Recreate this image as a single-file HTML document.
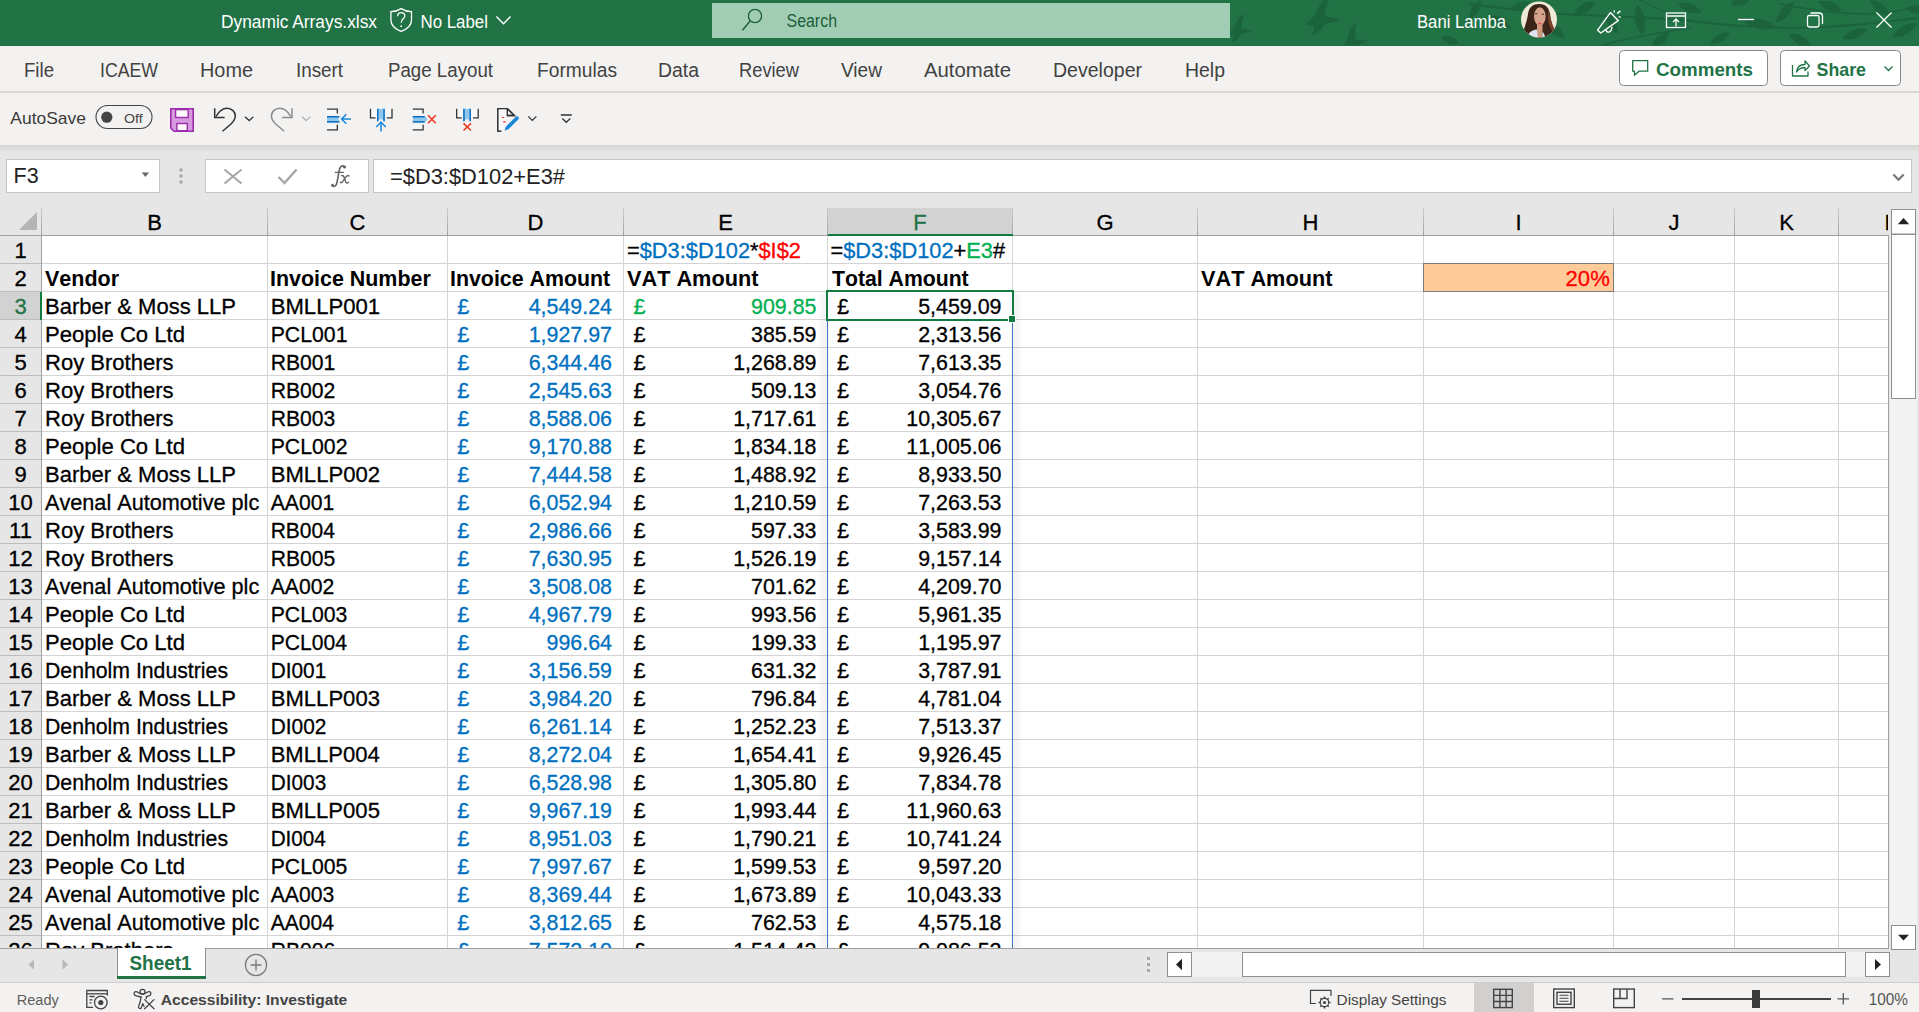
<!DOCTYPE html>
<html><head><meta charset="utf-8"><title>Dynamic Arrays.xlsx - Excel</title>
<style>html,body{margin:0;padding:0;overflow:hidden;background:#f3f2f1}
svg{display:block;font-family:"Liberation Sans", sans-serif}</style></head><body>
<svg width="1919" height="1012" viewBox="0 0 1919 1012"><rect x="0" y="0" width="1919" height="1012" fill="#f3f2f1" /><rect x="0" y="145" width="1919" height="803" fill="#e6e6e6" /><defs><linearGradient id="shd" x1="0" y1="0" x2="0" y2="1"><stop offset="0" stop-color="#d4d3d2"/><stop offset="1" stop-color="#e6e6e6"/></linearGradient><linearGradient id="hsep" x1="0" y1="0" x2="0" y2="1"><stop offset="0" stop-color="#cdcdcd"/><stop offset="1" stop-color="#a2a2a2"/></linearGradient><clipPath id="gridclip"><rect x="0" y="236" width="1888" height="712"/></clipPath><clipPath id="lclip"><rect x="1839" y="208" width="49" height="27"/></clipPath><clipPath id="tbclip"><rect x="0" y="0" width="1919" height="45"/></clipPath><clipPath id="avclip"><circle cx="1539" cy="19.5" r="18"/></clipPath></defs><rect x="0" y="145" width="1919" height="7" fill="url(#shd)" /><rect x="42" y="236" width="1846" height="712" fill="#ffffff" /><rect x="42" y="263" width="1846" height="1" fill="#d4d4d4"/><rect x="42" y="291" width="1846" height="1" fill="#d4d4d4"/><rect x="42" y="319" width="1846" height="1" fill="#d4d4d4"/><rect x="42" y="347" width="1846" height="1" fill="#d4d4d4"/><rect x="42" y="375" width="1846" height="1" fill="#d4d4d4"/><rect x="42" y="403" width="1846" height="1" fill="#d4d4d4"/><rect x="42" y="431" width="1846" height="1" fill="#d4d4d4"/><rect x="42" y="459" width="1846" height="1" fill="#d4d4d4"/><rect x="42" y="487" width="1846" height="1" fill="#d4d4d4"/><rect x="42" y="515" width="1846" height="1" fill="#d4d4d4"/><rect x="42" y="543" width="1846" height="1" fill="#d4d4d4"/><rect x="42" y="571" width="1846" height="1" fill="#d4d4d4"/><rect x="42" y="599" width="1846" height="1" fill="#d4d4d4"/><rect x="42" y="627" width="1846" height="1" fill="#d4d4d4"/><rect x="42" y="655" width="1846" height="1" fill="#d4d4d4"/><rect x="42" y="683" width="1846" height="1" fill="#d4d4d4"/><rect x="42" y="711" width="1846" height="1" fill="#d4d4d4"/><rect x="42" y="739" width="1846" height="1" fill="#d4d4d4"/><rect x="42" y="767" width="1846" height="1" fill="#d4d4d4"/><rect x="42" y="795" width="1846" height="1" fill="#d4d4d4"/><rect x="42" y="823" width="1846" height="1" fill="#d4d4d4"/><rect x="42" y="851" width="1846" height="1" fill="#d4d4d4"/><rect x="42" y="879" width="1846" height="1" fill="#d4d4d4"/><rect x="42" y="907" width="1846" height="1" fill="#d4d4d4"/><rect x="42" y="935" width="1846" height="1" fill="#d4d4d4"/><rect x="267" y="236" width="1" height="712" fill="#d4d4d4"/><rect x="447" y="236" width="1" height="712" fill="#d4d4d4"/><rect x="623" y="236" width="1" height="712" fill="#d4d4d4"/><rect x="827" y="236" width="1" height="712" fill="#d4d4d4"/><rect x="1012" y="236" width="1" height="712" fill="#d4d4d4"/><rect x="1197" y="236" width="1" height="712" fill="#d4d4d4"/><rect x="1423" y="236" width="1" height="712" fill="#d4d4d4"/><rect x="1613" y="236" width="1" height="712" fill="#d4d4d4"/><rect x="1734" y="236" width="1" height="712" fill="#d4d4d4"/><rect x="1838" y="236" width="1" height="712" fill="#d4d4d4"/><rect x="1423" y="263" width="191" height="29" fill="#ffcc99" stroke="none"/><rect x="1423.5" y="263.5" width="190" height="28" fill="none" stroke="#7b7b7b" stroke-width="1"/><g clip-path="url(#gridclip)" font-family='"Liberation Sans", sans-serif' style="font-kerning:none" class="ct"><text x="627" y="257.5" font-size="21.8" fill="#000" stroke="#000" stroke-width="0.3">=<tspan fill="#0070c0" stroke="#0070c0">$D3:$D102</tspan>*<tspan fill="#ff0000" stroke="#ff0000">$I$2</tspan></text><text x="830.5" y="257.5" font-size="21.8" fill="#000" stroke="#000" stroke-width="0.3">=<tspan fill="#0070c0" stroke="#0070c0">$D3:$D102</tspan>+<tspan fill="#00b050" stroke="#00b050">E3</tspan>#</text><text x="45" y="285.5" font-size="21.33" fill="#000" font-weight="700" textLength="74.07" lengthAdjust="spacingAndGlyphs" >Vendor</text><text x="270" y="285.5" font-size="21.33" fill="#000" font-weight="700" textLength="160.76" lengthAdjust="spacingAndGlyphs" >Invoice Number</text><text x="450" y="285.5" font-size="21.33" fill="#000" font-weight="700" textLength="160.19" lengthAdjust="spacingAndGlyphs" >Invoice Amount</text><text x="627" y="285.5" font-size="21.33" fill="#000" font-weight="700" textLength="131.41" lengthAdjust="spacingAndGlyphs" >VAT Amount</text><text x="832" y="285.5" font-size="21.33" fill="#000" font-weight="700" textLength="136.70" lengthAdjust="spacingAndGlyphs" >Total Amount</text><text x="1201" y="285.5" font-size="21.33" fill="#000" font-weight="700" textLength="131.41" lengthAdjust="spacingAndGlyphs" >VAT Amount</text><text x="1609.8" y="285.5" font-size="22" fill="#ff0000" text-anchor="end" textLength="44.20" lengthAdjust="spacingAndGlyphs" stroke="#ff0000" stroke-width="0.3">20%</text><text x="45" y="313.5" font-size="22" fill="#000" textLength="190.97" lengthAdjust="spacingAndGlyphs" stroke="#000" stroke-width="0.3">Barber &amp; Moss LLP</text><text x="270.7" y="313.5" font-size="22" fill="#000" textLength="109.39" lengthAdjust="spacingAndGlyphs" stroke="#000" stroke-width="0.3">BMLLP001</text><text x="457.2" y="313.5" font-size="22" fill="#0070c0" textLength="12.12" lengthAdjust="spacingAndGlyphs" stroke="#0070c0" stroke-width="0.3">£</text><text x="612" y="313.5" font-size="22" fill="#0070c0" text-anchor="end" textLength="83.30" lengthAdjust="spacingAndGlyphs" stroke="#0070c0" stroke-width="0.3">4,549.24</text><text x="633.5" y="313.5" font-size="22" fill="#00b050" textLength="12.12" lengthAdjust="spacingAndGlyphs" stroke="#00b050" stroke-width="0.3">£</text><text x="816.5" y="313.5" font-size="22" fill="#00b050" text-anchor="end" textLength="65.45" lengthAdjust="spacingAndGlyphs" stroke="#00b050" stroke-width="0.3">909.85</text><text x="837" y="313.5" font-size="22" fill="#000" textLength="12.12" lengthAdjust="spacingAndGlyphs" stroke="#000" stroke-width="0.3">£</text><text x="1001.5" y="313.5" font-size="22" fill="#000" text-anchor="end" textLength="83.30" lengthAdjust="spacingAndGlyphs" stroke="#000" stroke-width="0.3">5,459.09</text><text x="45" y="341.5" font-size="22" fill="#000" textLength="139.93" lengthAdjust="spacingAndGlyphs" stroke="#000" stroke-width="0.3">People Co Ltd</text><text x="270.7" y="341.5" font-size="22" fill="#000" textLength="76.78" lengthAdjust="spacingAndGlyphs" stroke="#000" stroke-width="0.3">PCL001</text><text x="457.2" y="341.5" font-size="22" fill="#0070c0" textLength="12.12" lengthAdjust="spacingAndGlyphs" stroke="#0070c0" stroke-width="0.3">£</text><text x="612" y="341.5" font-size="22" fill="#0070c0" text-anchor="end" textLength="83.30" lengthAdjust="spacingAndGlyphs" stroke="#0070c0" stroke-width="0.3">1,927.97</text><text x="633.5" y="341.5" font-size="22" fill="#000" textLength="12.12" lengthAdjust="spacingAndGlyphs" stroke="#000" stroke-width="0.3">£</text><text x="816.5" y="341.5" font-size="22" fill="#000" text-anchor="end" textLength="65.45" lengthAdjust="spacingAndGlyphs" stroke="#000" stroke-width="0.3">385.59</text><text x="837" y="341.5" font-size="22" fill="#000" textLength="12.12" lengthAdjust="spacingAndGlyphs" stroke="#000" stroke-width="0.3">£</text><text x="1001.5" y="341.5" font-size="22" fill="#000" text-anchor="end" textLength="83.30" lengthAdjust="spacingAndGlyphs" stroke="#000" stroke-width="0.3">2,313.56</text><text x="45" y="369.5" font-size="22" fill="#000" textLength="128.50" lengthAdjust="spacingAndGlyphs" stroke="#000" stroke-width="0.3">Roy Brothers</text><text x="270.7" y="369.5" font-size="22" fill="#000" textLength="64.67" lengthAdjust="spacingAndGlyphs" stroke="#000" stroke-width="0.3">RB001</text><text x="457.2" y="369.5" font-size="22" fill="#0070c0" textLength="12.12" lengthAdjust="spacingAndGlyphs" stroke="#0070c0" stroke-width="0.3">£</text><text x="612" y="369.5" font-size="22" fill="#0070c0" text-anchor="end" textLength="83.30" lengthAdjust="spacingAndGlyphs" stroke="#0070c0" stroke-width="0.3">6,344.46</text><text x="633.5" y="369.5" font-size="22" fill="#000" textLength="12.12" lengthAdjust="spacingAndGlyphs" stroke="#000" stroke-width="0.3">£</text><text x="816.5" y="369.5" font-size="22" fill="#000" text-anchor="end" textLength="83.30" lengthAdjust="spacingAndGlyphs" stroke="#000" stroke-width="0.3">1,268.89</text><text x="837" y="369.5" font-size="22" fill="#000" textLength="12.12" lengthAdjust="spacingAndGlyphs" stroke="#000" stroke-width="0.3">£</text><text x="1001.5" y="369.5" font-size="22" fill="#000" text-anchor="end" textLength="83.30" lengthAdjust="spacingAndGlyphs" stroke="#000" stroke-width="0.3">7,613.35</text><text x="45" y="397.5" font-size="22" fill="#000" textLength="128.50" lengthAdjust="spacingAndGlyphs" stroke="#000" stroke-width="0.3">Roy Brothers</text><text x="270.7" y="397.5" font-size="22" fill="#000" textLength="64.70" lengthAdjust="spacingAndGlyphs" stroke="#000" stroke-width="0.3">RB002</text><text x="457.2" y="397.5" font-size="22" fill="#0070c0" textLength="12.12" lengthAdjust="spacingAndGlyphs" stroke="#0070c0" stroke-width="0.3">£</text><text x="612" y="397.5" font-size="22" fill="#0070c0" text-anchor="end" textLength="83.30" lengthAdjust="spacingAndGlyphs" stroke="#0070c0" stroke-width="0.3">2,545.63</text><text x="633.5" y="397.5" font-size="22" fill="#000" textLength="12.12" lengthAdjust="spacingAndGlyphs" stroke="#000" stroke-width="0.3">£</text><text x="816.5" y="397.5" font-size="22" fill="#000" text-anchor="end" textLength="65.45" lengthAdjust="spacingAndGlyphs" stroke="#000" stroke-width="0.3">509.13</text><text x="837" y="397.5" font-size="22" fill="#000" textLength="12.12" lengthAdjust="spacingAndGlyphs" stroke="#000" stroke-width="0.3">£</text><text x="1001.5" y="397.5" font-size="22" fill="#000" text-anchor="end" textLength="83.30" lengthAdjust="spacingAndGlyphs" stroke="#000" stroke-width="0.3">3,054.76</text><text x="45" y="425.5" font-size="22" fill="#000" textLength="128.50" lengthAdjust="spacingAndGlyphs" stroke="#000" stroke-width="0.3">Roy Brothers</text><text x="270.7" y="425.5" font-size="22" fill="#000" textLength="64.56" lengthAdjust="spacingAndGlyphs" stroke="#000" stroke-width="0.3">RB003</text><text x="457.2" y="425.5" font-size="22" fill="#0070c0" textLength="12.12" lengthAdjust="spacingAndGlyphs" stroke="#0070c0" stroke-width="0.3">£</text><text x="612" y="425.5" font-size="22" fill="#0070c0" text-anchor="end" textLength="83.30" lengthAdjust="spacingAndGlyphs" stroke="#0070c0" stroke-width="0.3">8,588.06</text><text x="633.5" y="425.5" font-size="22" fill="#000" textLength="12.12" lengthAdjust="spacingAndGlyphs" stroke="#000" stroke-width="0.3">£</text><text x="816.5" y="425.5" font-size="22" fill="#000" text-anchor="end" textLength="83.30" lengthAdjust="spacingAndGlyphs" stroke="#000" stroke-width="0.3">1,717.61</text><text x="837" y="425.5" font-size="22" fill="#000" textLength="12.12" lengthAdjust="spacingAndGlyphs" stroke="#000" stroke-width="0.3">£</text><text x="1001.5" y="425.5" font-size="22" fill="#000" text-anchor="end" textLength="95.20" lengthAdjust="spacingAndGlyphs" stroke="#000" stroke-width="0.3">10,305.67</text><text x="45" y="453.5" font-size="22" fill="#000" textLength="139.93" lengthAdjust="spacingAndGlyphs" stroke="#000" stroke-width="0.3">People Co Ltd</text><text x="270.7" y="453.5" font-size="22" fill="#000" textLength="76.81" lengthAdjust="spacingAndGlyphs" stroke="#000" stroke-width="0.3">PCL002</text><text x="457.2" y="453.5" font-size="22" fill="#0070c0" textLength="12.12" lengthAdjust="spacingAndGlyphs" stroke="#0070c0" stroke-width="0.3">£</text><text x="612" y="453.5" font-size="22" fill="#0070c0" text-anchor="end" textLength="83.30" lengthAdjust="spacingAndGlyphs" stroke="#0070c0" stroke-width="0.3">9,170.88</text><text x="633.5" y="453.5" font-size="22" fill="#000" textLength="12.12" lengthAdjust="spacingAndGlyphs" stroke="#000" stroke-width="0.3">£</text><text x="816.5" y="453.5" font-size="22" fill="#000" text-anchor="end" textLength="83.30" lengthAdjust="spacingAndGlyphs" stroke="#000" stroke-width="0.3">1,834.18</text><text x="837" y="453.5" font-size="22" fill="#000" textLength="12.12" lengthAdjust="spacingAndGlyphs" stroke="#000" stroke-width="0.3">£</text><text x="1001.5" y="453.5" font-size="22" fill="#000" text-anchor="end" textLength="95.20" lengthAdjust="spacingAndGlyphs" stroke="#000" stroke-width="0.3">11,005.06</text><text x="45" y="481.5" font-size="22" fill="#000" textLength="190.97" lengthAdjust="spacingAndGlyphs" stroke="#000" stroke-width="0.3">Barber &amp; Moss LLP</text><text x="270.7" y="481.5" font-size="22" fill="#000" textLength="109.43" lengthAdjust="spacingAndGlyphs" stroke="#000" stroke-width="0.3">BMLLP002</text><text x="457.2" y="481.5" font-size="22" fill="#0070c0" textLength="12.12" lengthAdjust="spacingAndGlyphs" stroke="#0070c0" stroke-width="0.3">£</text><text x="612" y="481.5" font-size="22" fill="#0070c0" text-anchor="end" textLength="83.30" lengthAdjust="spacingAndGlyphs" stroke="#0070c0" stroke-width="0.3">7,444.58</text><text x="633.5" y="481.5" font-size="22" fill="#000" textLength="12.12" lengthAdjust="spacingAndGlyphs" stroke="#000" stroke-width="0.3">£</text><text x="816.5" y="481.5" font-size="22" fill="#000" text-anchor="end" textLength="83.30" lengthAdjust="spacingAndGlyphs" stroke="#000" stroke-width="0.3">1,488.92</text><text x="837" y="481.5" font-size="22" fill="#000" textLength="12.12" lengthAdjust="spacingAndGlyphs" stroke="#000" stroke-width="0.3">£</text><text x="1001.5" y="481.5" font-size="22" fill="#000" text-anchor="end" textLength="83.30" lengthAdjust="spacingAndGlyphs" stroke="#000" stroke-width="0.3">8,933.50</text><text x="45" y="509.5" font-size="22" fill="#000" textLength="214.21" lengthAdjust="spacingAndGlyphs" stroke="#000" stroke-width="0.3">Avenal Automotive plc</text><text x="270.7" y="509.5" font-size="22" fill="#000" textLength="63.58" lengthAdjust="spacingAndGlyphs" stroke="#000" stroke-width="0.3">AA001</text><text x="457.2" y="509.5" font-size="22" fill="#0070c0" textLength="12.12" lengthAdjust="spacingAndGlyphs" stroke="#0070c0" stroke-width="0.3">£</text><text x="612" y="509.5" font-size="22" fill="#0070c0" text-anchor="end" textLength="83.30" lengthAdjust="spacingAndGlyphs" stroke="#0070c0" stroke-width="0.3">6,052.94</text><text x="633.5" y="509.5" font-size="22" fill="#000" textLength="12.12" lengthAdjust="spacingAndGlyphs" stroke="#000" stroke-width="0.3">£</text><text x="816.5" y="509.5" font-size="22" fill="#000" text-anchor="end" textLength="83.30" lengthAdjust="spacingAndGlyphs" stroke="#000" stroke-width="0.3">1,210.59</text><text x="837" y="509.5" font-size="22" fill="#000" textLength="12.12" lengthAdjust="spacingAndGlyphs" stroke="#000" stroke-width="0.3">£</text><text x="1001.5" y="509.5" font-size="22" fill="#000" text-anchor="end" textLength="83.30" lengthAdjust="spacingAndGlyphs" stroke="#000" stroke-width="0.3">7,263.53</text><text x="45" y="537.5" font-size="22" fill="#000" textLength="128.50" lengthAdjust="spacingAndGlyphs" stroke="#000" stroke-width="0.3">Roy Brothers</text><text x="270.7" y="537.5" font-size="22" fill="#000" textLength="64.24" lengthAdjust="spacingAndGlyphs" stroke="#000" stroke-width="0.3">RB004</text><text x="457.2" y="537.5" font-size="22" fill="#0070c0" textLength="12.12" lengthAdjust="spacingAndGlyphs" stroke="#0070c0" stroke-width="0.3">£</text><text x="612" y="537.5" font-size="22" fill="#0070c0" text-anchor="end" textLength="83.30" lengthAdjust="spacingAndGlyphs" stroke="#0070c0" stroke-width="0.3">2,986.66</text><text x="633.5" y="537.5" font-size="22" fill="#000" textLength="12.12" lengthAdjust="spacingAndGlyphs" stroke="#000" stroke-width="0.3">£</text><text x="816.5" y="537.5" font-size="22" fill="#000" text-anchor="end" textLength="65.45" lengthAdjust="spacingAndGlyphs" stroke="#000" stroke-width="0.3">597.33</text><text x="837" y="537.5" font-size="22" fill="#000" textLength="12.12" lengthAdjust="spacingAndGlyphs" stroke="#000" stroke-width="0.3">£</text><text x="1001.5" y="537.5" font-size="22" fill="#000" text-anchor="end" textLength="83.30" lengthAdjust="spacingAndGlyphs" stroke="#000" stroke-width="0.3">3,583.99</text><text x="45" y="565.5" font-size="22" fill="#000" textLength="128.50" lengthAdjust="spacingAndGlyphs" stroke="#000" stroke-width="0.3">Roy Brothers</text><text x="270.7" y="565.5" font-size="22" fill="#000" textLength="64.52" lengthAdjust="spacingAndGlyphs" stroke="#000" stroke-width="0.3">RB005</text><text x="457.2" y="565.5" font-size="22" fill="#0070c0" textLength="12.12" lengthAdjust="spacingAndGlyphs" stroke="#0070c0" stroke-width="0.3">£</text><text x="612" y="565.5" font-size="22" fill="#0070c0" text-anchor="end" textLength="83.30" lengthAdjust="spacingAndGlyphs" stroke="#0070c0" stroke-width="0.3">7,630.95</text><text x="633.5" y="565.5" font-size="22" fill="#000" textLength="12.12" lengthAdjust="spacingAndGlyphs" stroke="#000" stroke-width="0.3">£</text><text x="816.5" y="565.5" font-size="22" fill="#000" text-anchor="end" textLength="83.30" lengthAdjust="spacingAndGlyphs" stroke="#000" stroke-width="0.3">1,526.19</text><text x="837" y="565.5" font-size="22" fill="#000" textLength="12.12" lengthAdjust="spacingAndGlyphs" stroke="#000" stroke-width="0.3">£</text><text x="1001.5" y="565.5" font-size="22" fill="#000" text-anchor="end" textLength="83.30" lengthAdjust="spacingAndGlyphs" stroke="#000" stroke-width="0.3">9,157.14</text><text x="45" y="593.5" font-size="22" fill="#000" textLength="214.21" lengthAdjust="spacingAndGlyphs" stroke="#000" stroke-width="0.3">Avenal Automotive plc</text><text x="270.7" y="593.5" font-size="22" fill="#000" textLength="63.61" lengthAdjust="spacingAndGlyphs" stroke="#000" stroke-width="0.3">AA002</text><text x="457.2" y="593.5" font-size="22" fill="#0070c0" textLength="12.12" lengthAdjust="spacingAndGlyphs" stroke="#0070c0" stroke-width="0.3">£</text><text x="612" y="593.5" font-size="22" fill="#0070c0" text-anchor="end" textLength="83.30" lengthAdjust="spacingAndGlyphs" stroke="#0070c0" stroke-width="0.3">3,508.08</text><text x="633.5" y="593.5" font-size="22" fill="#000" textLength="12.12" lengthAdjust="spacingAndGlyphs" stroke="#000" stroke-width="0.3">£</text><text x="816.5" y="593.5" font-size="22" fill="#000" text-anchor="end" textLength="65.45" lengthAdjust="spacingAndGlyphs" stroke="#000" stroke-width="0.3">701.62</text><text x="837" y="593.5" font-size="22" fill="#000" textLength="12.12" lengthAdjust="spacingAndGlyphs" stroke="#000" stroke-width="0.3">£</text><text x="1001.5" y="593.5" font-size="22" fill="#000" text-anchor="end" textLength="83.30" lengthAdjust="spacingAndGlyphs" stroke="#000" stroke-width="0.3">4,209.70</text><text x="45" y="621.5" font-size="22" fill="#000" textLength="139.93" lengthAdjust="spacingAndGlyphs" stroke="#000" stroke-width="0.3">People Co Ltd</text><text x="270.7" y="621.5" font-size="22" fill="#000" textLength="76.67" lengthAdjust="spacingAndGlyphs" stroke="#000" stroke-width="0.3">PCL003</text><text x="457.2" y="621.5" font-size="22" fill="#0070c0" textLength="12.12" lengthAdjust="spacingAndGlyphs" stroke="#0070c0" stroke-width="0.3">£</text><text x="612" y="621.5" font-size="22" fill="#0070c0" text-anchor="end" textLength="83.30" lengthAdjust="spacingAndGlyphs" stroke="#0070c0" stroke-width="0.3">4,967.79</text><text x="633.5" y="621.5" font-size="22" fill="#000" textLength="12.12" lengthAdjust="spacingAndGlyphs" stroke="#000" stroke-width="0.3">£</text><text x="816.5" y="621.5" font-size="22" fill="#000" text-anchor="end" textLength="65.45" lengthAdjust="spacingAndGlyphs" stroke="#000" stroke-width="0.3">993.56</text><text x="837" y="621.5" font-size="22" fill="#000" textLength="12.12" lengthAdjust="spacingAndGlyphs" stroke="#000" stroke-width="0.3">£</text><text x="1001.5" y="621.5" font-size="22" fill="#000" text-anchor="end" textLength="83.30" lengthAdjust="spacingAndGlyphs" stroke="#000" stroke-width="0.3">5,961.35</text><text x="45" y="649.5" font-size="22" fill="#000" textLength="139.93" lengthAdjust="spacingAndGlyphs" stroke="#000" stroke-width="0.3">People Co Ltd</text><text x="270.7" y="649.5" font-size="22" fill="#000" textLength="76.35" lengthAdjust="spacingAndGlyphs" stroke="#000" stroke-width="0.3">PCL004</text><text x="457.2" y="649.5" font-size="22" fill="#0070c0" textLength="12.12" lengthAdjust="spacingAndGlyphs" stroke="#0070c0" stroke-width="0.3">£</text><text x="612" y="649.5" font-size="22" fill="#0070c0" text-anchor="end" textLength="65.45" lengthAdjust="spacingAndGlyphs" stroke="#0070c0" stroke-width="0.3">996.64</text><text x="633.5" y="649.5" font-size="22" fill="#000" textLength="12.12" lengthAdjust="spacingAndGlyphs" stroke="#000" stroke-width="0.3">£</text><text x="816.5" y="649.5" font-size="22" fill="#000" text-anchor="end" textLength="65.45" lengthAdjust="spacingAndGlyphs" stroke="#000" stroke-width="0.3">199.33</text><text x="837" y="649.5" font-size="22" fill="#000" textLength="12.12" lengthAdjust="spacingAndGlyphs" stroke="#000" stroke-width="0.3">£</text><text x="1001.5" y="649.5" font-size="22" fill="#000" text-anchor="end" textLength="83.30" lengthAdjust="spacingAndGlyphs" stroke="#000" stroke-width="0.3">1,195.97</text><text x="45" y="677.5" font-size="22" fill="#000" textLength="183.01" lengthAdjust="spacingAndGlyphs" stroke="#000" stroke-width="0.3">Denholm Industries</text><text x="270.7" y="677.5" font-size="22" fill="#000" textLength="55.63" lengthAdjust="spacingAndGlyphs" stroke="#000" stroke-width="0.3">DI001</text><text x="457.2" y="677.5" font-size="22" fill="#0070c0" textLength="12.12" lengthAdjust="spacingAndGlyphs" stroke="#0070c0" stroke-width="0.3">£</text><text x="612" y="677.5" font-size="22" fill="#0070c0" text-anchor="end" textLength="83.30" lengthAdjust="spacingAndGlyphs" stroke="#0070c0" stroke-width="0.3">3,156.59</text><text x="633.5" y="677.5" font-size="22" fill="#000" textLength="12.12" lengthAdjust="spacingAndGlyphs" stroke="#000" stroke-width="0.3">£</text><text x="816.5" y="677.5" font-size="22" fill="#000" text-anchor="end" textLength="65.45" lengthAdjust="spacingAndGlyphs" stroke="#000" stroke-width="0.3">631.32</text><text x="837" y="677.5" font-size="22" fill="#000" textLength="12.12" lengthAdjust="spacingAndGlyphs" stroke="#000" stroke-width="0.3">£</text><text x="1001.5" y="677.5" font-size="22" fill="#000" text-anchor="end" textLength="83.30" lengthAdjust="spacingAndGlyphs" stroke="#000" stroke-width="0.3">3,787.91</text><text x="45" y="705.5" font-size="22" fill="#000" textLength="190.97" lengthAdjust="spacingAndGlyphs" stroke="#000" stroke-width="0.3">Barber &amp; Moss LLP</text><text x="270.7" y="705.5" font-size="22" fill="#000" textLength="109.28" lengthAdjust="spacingAndGlyphs" stroke="#000" stroke-width="0.3">BMLLP003</text><text x="457.2" y="705.5" font-size="22" fill="#0070c0" textLength="12.12" lengthAdjust="spacingAndGlyphs" stroke="#0070c0" stroke-width="0.3">£</text><text x="612" y="705.5" font-size="22" fill="#0070c0" text-anchor="end" textLength="83.30" lengthAdjust="spacingAndGlyphs" stroke="#0070c0" stroke-width="0.3">3,984.20</text><text x="633.5" y="705.5" font-size="22" fill="#000" textLength="12.12" lengthAdjust="spacingAndGlyphs" stroke="#000" stroke-width="0.3">£</text><text x="816.5" y="705.5" font-size="22" fill="#000" text-anchor="end" textLength="65.45" lengthAdjust="spacingAndGlyphs" stroke="#000" stroke-width="0.3">796.84</text><text x="837" y="705.5" font-size="22" fill="#000" textLength="12.12" lengthAdjust="spacingAndGlyphs" stroke="#000" stroke-width="0.3">£</text><text x="1001.5" y="705.5" font-size="22" fill="#000" text-anchor="end" textLength="83.30" lengthAdjust="spacingAndGlyphs" stroke="#000" stroke-width="0.3">4,781.04</text><text x="45" y="733.5" font-size="22" fill="#000" textLength="183.01" lengthAdjust="spacingAndGlyphs" stroke="#000" stroke-width="0.3">Denholm Industries</text><text x="270.7" y="733.5" font-size="22" fill="#000" textLength="55.66" lengthAdjust="spacingAndGlyphs" stroke="#000" stroke-width="0.3">DI002</text><text x="457.2" y="733.5" font-size="22" fill="#0070c0" textLength="12.12" lengthAdjust="spacingAndGlyphs" stroke="#0070c0" stroke-width="0.3">£</text><text x="612" y="733.5" font-size="22" fill="#0070c0" text-anchor="end" textLength="83.30" lengthAdjust="spacingAndGlyphs" stroke="#0070c0" stroke-width="0.3">6,261.14</text><text x="633.5" y="733.5" font-size="22" fill="#000" textLength="12.12" lengthAdjust="spacingAndGlyphs" stroke="#000" stroke-width="0.3">£</text><text x="816.5" y="733.5" font-size="22" fill="#000" text-anchor="end" textLength="83.30" lengthAdjust="spacingAndGlyphs" stroke="#000" stroke-width="0.3">1,252.23</text><text x="837" y="733.5" font-size="22" fill="#000" textLength="12.12" lengthAdjust="spacingAndGlyphs" stroke="#000" stroke-width="0.3">£</text><text x="1001.5" y="733.5" font-size="22" fill="#000" text-anchor="end" textLength="83.30" lengthAdjust="spacingAndGlyphs" stroke="#000" stroke-width="0.3">7,513.37</text><text x="45" y="761.5" font-size="22" fill="#000" textLength="190.97" lengthAdjust="spacingAndGlyphs" stroke="#000" stroke-width="0.3">Barber &amp; Moss LLP</text><text x="270.7" y="761.5" font-size="22" fill="#000" textLength="108.95" lengthAdjust="spacingAndGlyphs" stroke="#000" stroke-width="0.3">BMLLP004</text><text x="457.2" y="761.5" font-size="22" fill="#0070c0" textLength="12.12" lengthAdjust="spacingAndGlyphs" stroke="#0070c0" stroke-width="0.3">£</text><text x="612" y="761.5" font-size="22" fill="#0070c0" text-anchor="end" textLength="83.30" lengthAdjust="spacingAndGlyphs" stroke="#0070c0" stroke-width="0.3">8,272.04</text><text x="633.5" y="761.5" font-size="22" fill="#000" textLength="12.12" lengthAdjust="spacingAndGlyphs" stroke="#000" stroke-width="0.3">£</text><text x="816.5" y="761.5" font-size="22" fill="#000" text-anchor="end" textLength="83.30" lengthAdjust="spacingAndGlyphs" stroke="#000" stroke-width="0.3">1,654.41</text><text x="837" y="761.5" font-size="22" fill="#000" textLength="12.12" lengthAdjust="spacingAndGlyphs" stroke="#000" stroke-width="0.3">£</text><text x="1001.5" y="761.5" font-size="22" fill="#000" text-anchor="end" textLength="83.30" lengthAdjust="spacingAndGlyphs" stroke="#000" stroke-width="0.3">9,926.45</text><text x="45" y="789.5" font-size="22" fill="#000" textLength="183.01" lengthAdjust="spacingAndGlyphs" stroke="#000" stroke-width="0.3">Denholm Industries</text><text x="270.7" y="789.5" font-size="22" fill="#000" textLength="55.52" lengthAdjust="spacingAndGlyphs" stroke="#000" stroke-width="0.3">DI003</text><text x="457.2" y="789.5" font-size="22" fill="#0070c0" textLength="12.12" lengthAdjust="spacingAndGlyphs" stroke="#0070c0" stroke-width="0.3">£</text><text x="612" y="789.5" font-size="22" fill="#0070c0" text-anchor="end" textLength="83.30" lengthAdjust="spacingAndGlyphs" stroke="#0070c0" stroke-width="0.3">6,528.98</text><text x="633.5" y="789.5" font-size="22" fill="#000" textLength="12.12" lengthAdjust="spacingAndGlyphs" stroke="#000" stroke-width="0.3">£</text><text x="816.5" y="789.5" font-size="22" fill="#000" text-anchor="end" textLength="83.30" lengthAdjust="spacingAndGlyphs" stroke="#000" stroke-width="0.3">1,305.80</text><text x="837" y="789.5" font-size="22" fill="#000" textLength="12.12" lengthAdjust="spacingAndGlyphs" stroke="#000" stroke-width="0.3">£</text><text x="1001.5" y="789.5" font-size="22" fill="#000" text-anchor="end" textLength="83.30" lengthAdjust="spacingAndGlyphs" stroke="#000" stroke-width="0.3">7,834.78</text><text x="45" y="817.5" font-size="22" fill="#000" textLength="190.97" lengthAdjust="spacingAndGlyphs" stroke="#000" stroke-width="0.3">Barber &amp; Moss LLP</text><text x="270.7" y="817.5" font-size="22" fill="#000" textLength="109.24" lengthAdjust="spacingAndGlyphs" stroke="#000" stroke-width="0.3">BMLLP005</text><text x="457.2" y="817.5" font-size="22" fill="#0070c0" textLength="12.12" lengthAdjust="spacingAndGlyphs" stroke="#0070c0" stroke-width="0.3">£</text><text x="612" y="817.5" font-size="22" fill="#0070c0" text-anchor="end" textLength="83.30" lengthAdjust="spacingAndGlyphs" stroke="#0070c0" stroke-width="0.3">9,967.19</text><text x="633.5" y="817.5" font-size="22" fill="#000" textLength="12.12" lengthAdjust="spacingAndGlyphs" stroke="#000" stroke-width="0.3">£</text><text x="816.5" y="817.5" font-size="22" fill="#000" text-anchor="end" textLength="83.30" lengthAdjust="spacingAndGlyphs" stroke="#000" stroke-width="0.3">1,993.44</text><text x="837" y="817.5" font-size="22" fill="#000" textLength="12.12" lengthAdjust="spacingAndGlyphs" stroke="#000" stroke-width="0.3">£</text><text x="1001.5" y="817.5" font-size="22" fill="#000" text-anchor="end" textLength="95.20" lengthAdjust="spacingAndGlyphs" stroke="#000" stroke-width="0.3">11,960.63</text><text x="45" y="845.5" font-size="22" fill="#000" textLength="183.01" lengthAdjust="spacingAndGlyphs" stroke="#000" stroke-width="0.3">Denholm Industries</text><text x="270.7" y="845.5" font-size="22" fill="#000" textLength="55.20" lengthAdjust="spacingAndGlyphs" stroke="#000" stroke-width="0.3">DI004</text><text x="457.2" y="845.5" font-size="22" fill="#0070c0" textLength="12.12" lengthAdjust="spacingAndGlyphs" stroke="#0070c0" stroke-width="0.3">£</text><text x="612" y="845.5" font-size="22" fill="#0070c0" text-anchor="end" textLength="83.30" lengthAdjust="spacingAndGlyphs" stroke="#0070c0" stroke-width="0.3">8,951.03</text><text x="633.5" y="845.5" font-size="22" fill="#000" textLength="12.12" lengthAdjust="spacingAndGlyphs" stroke="#000" stroke-width="0.3">£</text><text x="816.5" y="845.5" font-size="22" fill="#000" text-anchor="end" textLength="83.30" lengthAdjust="spacingAndGlyphs" stroke="#000" stroke-width="0.3">1,790.21</text><text x="837" y="845.5" font-size="22" fill="#000" textLength="12.12" lengthAdjust="spacingAndGlyphs" stroke="#000" stroke-width="0.3">£</text><text x="1001.5" y="845.5" font-size="22" fill="#000" text-anchor="end" textLength="95.20" lengthAdjust="spacingAndGlyphs" stroke="#000" stroke-width="0.3">10,741.24</text><text x="45" y="873.5" font-size="22" fill="#000" textLength="139.93" lengthAdjust="spacingAndGlyphs" stroke="#000" stroke-width="0.3">People Co Ltd</text><text x="270.7" y="873.5" font-size="22" fill="#000" textLength="76.63" lengthAdjust="spacingAndGlyphs" stroke="#000" stroke-width="0.3">PCL005</text><text x="457.2" y="873.5" font-size="22" fill="#0070c0" textLength="12.12" lengthAdjust="spacingAndGlyphs" stroke="#0070c0" stroke-width="0.3">£</text><text x="612" y="873.5" font-size="22" fill="#0070c0" text-anchor="end" textLength="83.30" lengthAdjust="spacingAndGlyphs" stroke="#0070c0" stroke-width="0.3">7,997.67</text><text x="633.5" y="873.5" font-size="22" fill="#000" textLength="12.12" lengthAdjust="spacingAndGlyphs" stroke="#000" stroke-width="0.3">£</text><text x="816.5" y="873.5" font-size="22" fill="#000" text-anchor="end" textLength="83.30" lengthAdjust="spacingAndGlyphs" stroke="#000" stroke-width="0.3">1,599.53</text><text x="837" y="873.5" font-size="22" fill="#000" textLength="12.12" lengthAdjust="spacingAndGlyphs" stroke="#000" stroke-width="0.3">£</text><text x="1001.5" y="873.5" font-size="22" fill="#000" text-anchor="end" textLength="83.30" lengthAdjust="spacingAndGlyphs" stroke="#000" stroke-width="0.3">9,597.20</text><text x="45" y="901.5" font-size="22" fill="#000" textLength="214.21" lengthAdjust="spacingAndGlyphs" stroke="#000" stroke-width="0.3">Avenal Automotive plc</text><text x="270.7" y="901.5" font-size="22" fill="#000" textLength="63.47" lengthAdjust="spacingAndGlyphs" stroke="#000" stroke-width="0.3">AA003</text><text x="457.2" y="901.5" font-size="22" fill="#0070c0" textLength="12.12" lengthAdjust="spacingAndGlyphs" stroke="#0070c0" stroke-width="0.3">£</text><text x="612" y="901.5" font-size="22" fill="#0070c0" text-anchor="end" textLength="83.30" lengthAdjust="spacingAndGlyphs" stroke="#0070c0" stroke-width="0.3">8,369.44</text><text x="633.5" y="901.5" font-size="22" fill="#000" textLength="12.12" lengthAdjust="spacingAndGlyphs" stroke="#000" stroke-width="0.3">£</text><text x="816.5" y="901.5" font-size="22" fill="#000" text-anchor="end" textLength="83.30" lengthAdjust="spacingAndGlyphs" stroke="#000" stroke-width="0.3">1,673.89</text><text x="837" y="901.5" font-size="22" fill="#000" textLength="12.12" lengthAdjust="spacingAndGlyphs" stroke="#000" stroke-width="0.3">£</text><text x="1001.5" y="901.5" font-size="22" fill="#000" text-anchor="end" textLength="95.20" lengthAdjust="spacingAndGlyphs" stroke="#000" stroke-width="0.3">10,043.33</text><text x="45" y="929.5" font-size="22" fill="#000" textLength="214.21" lengthAdjust="spacingAndGlyphs" stroke="#000" stroke-width="0.3">Avenal Automotive plc</text><text x="270.7" y="929.5" font-size="22" fill="#000" textLength="63.16" lengthAdjust="spacingAndGlyphs" stroke="#000" stroke-width="0.3">AA004</text><text x="457.2" y="929.5" font-size="22" fill="#0070c0" textLength="12.12" lengthAdjust="spacingAndGlyphs" stroke="#0070c0" stroke-width="0.3">£</text><text x="612" y="929.5" font-size="22" fill="#0070c0" text-anchor="end" textLength="83.30" lengthAdjust="spacingAndGlyphs" stroke="#0070c0" stroke-width="0.3">3,812.65</text><text x="633.5" y="929.5" font-size="22" fill="#000" textLength="12.12" lengthAdjust="spacingAndGlyphs" stroke="#000" stroke-width="0.3">£</text><text x="816.5" y="929.5" font-size="22" fill="#000" text-anchor="end" textLength="65.45" lengthAdjust="spacingAndGlyphs" stroke="#000" stroke-width="0.3">762.53</text><text x="837" y="929.5" font-size="22" fill="#000" textLength="12.12" lengthAdjust="spacingAndGlyphs" stroke="#000" stroke-width="0.3">£</text><text x="1001.5" y="929.5" font-size="22" fill="#000" text-anchor="end" textLength="83.30" lengthAdjust="spacingAndGlyphs" stroke="#000" stroke-width="0.3">4,575.18</text><text x="45" y="957.5" font-size="22" fill="#000" textLength="128.50" lengthAdjust="spacingAndGlyphs" stroke="#000" stroke-width="0.3">Roy Brothers</text><text x="270.7" y="957.5" font-size="22" fill="#000" textLength="64.56" lengthAdjust="spacingAndGlyphs" stroke="#000" stroke-width="0.3">RB006</text><text x="457.2" y="957.5" font-size="22" fill="#0070c0" textLength="12.12" lengthAdjust="spacingAndGlyphs" stroke="#0070c0" stroke-width="0.3">£</text><text x="612" y="957.5" font-size="22" fill="#0070c0" text-anchor="end" textLength="83.30" lengthAdjust="spacingAndGlyphs" stroke="#0070c0" stroke-width="0.3">7,572.10</text><text x="633.5" y="957.5" font-size="22" fill="#000" textLength="12.12" lengthAdjust="spacingAndGlyphs" stroke="#000" stroke-width="0.3">£</text><text x="816.5" y="957.5" font-size="22" fill="#000" text-anchor="end" textLength="83.30" lengthAdjust="spacingAndGlyphs" stroke="#000" stroke-width="0.3">1,514.42</text><text x="837" y="957.5" font-size="22" fill="#000" textLength="12.12" lengthAdjust="spacingAndGlyphs" stroke="#000" stroke-width="0.3">£</text><text x="1001.5" y="957.5" font-size="22" fill="#000" text-anchor="end" textLength="83.30" lengthAdjust="spacingAndGlyphs" stroke="#000" stroke-width="0.3">9,086.52</text></g><defs><filter id="sh" x="-20%" y="-5%" width="140%" height="110%"><feGaussianBlur stdDeviation="3"/></filter></defs><g clip-path="url(#gridclip)"><path d="M822 292 L822 960 L827 960 L827 292 Z M1013 292 L1013 960 L1018 960 L1018 292 Z" fill="#000" opacity="0.07" filter="url(#sh)"/></g><rect x="827.5" y="291.5" width="185" height="700" fill="none" stroke="#4472c4" stroke-width="1" clip-path="url(#gridclip)"/><rect x="827" y="291" width="186" height="29" fill="none" stroke="#107c41" stroke-width="2"/><rect x="1008" y="315" width="8" height="8" fill="#ffffff" /><rect x="1009" y="316" width="6" height="6" fill="#107c41" /><rect x="0" y="208" width="1888" height="27" fill="#e6e6e6" /><rect x="828" y="208" width="184" height="27" fill="#d2d2d2" /><rect x="267" y="208" width="1" height="27" fill="url(#hsep)"/><rect x="447" y="208" width="1" height="27" fill="url(#hsep)"/><rect x="623" y="208" width="1" height="27" fill="url(#hsep)"/><rect x="827" y="208" width="1" height="27" fill="url(#hsep)"/><rect x="1012" y="208" width="1" height="27" fill="url(#hsep)"/><rect x="1197" y="208" width="1" height="27" fill="url(#hsep)"/><rect x="1423" y="208" width="1" height="27" fill="url(#hsep)"/><rect x="1613" y="208" width="1" height="27" fill="url(#hsep)"/><rect x="1734" y="208" width="1" height="27" fill="url(#hsep)"/><rect x="1838" y="208" width="1" height="27" fill="url(#hsep)"/><rect x="41" y="208" width="1" height="27" fill="url(#hsep)"/><rect x="0" y="235" width="1888" height="1" fill="#a0a0a0"/><rect x="828" y="234" width="185" height="2" fill="#107c41" /><path d="M37 212 L37 230 L19 230 Z" fill="#b4b4b4"/><g font-family='"Liberation Sans", sans-serif'><text x="154.5" y="230" font-size="22" fill="#000" text-anchor="middle" stroke="#000" stroke-width="0.3">B</text><text x="357.5" y="230" font-size="22" fill="#000" text-anchor="middle" stroke="#000" stroke-width="0.3">C</text><text x="535.5" y="230" font-size="22" fill="#000" text-anchor="middle" stroke="#000" stroke-width="0.3">D</text><text x="725.5" y="230" font-size="22" fill="#000" text-anchor="middle" stroke="#000" stroke-width="0.3">E</text><text x="920.0" y="230" font-size="22" fill="#217346" text-anchor="middle" stroke="#217346" stroke-width="0.3">F</text><text x="1105.0" y="230" font-size="22" fill="#000" text-anchor="middle" stroke="#000" stroke-width="0.3">G</text><text x="1310.5" y="230" font-size="22" fill="#000" text-anchor="middle" stroke="#000" stroke-width="0.3">H</text><text x="1518.5" y="230" font-size="22" fill="#000" text-anchor="middle" stroke="#000" stroke-width="0.3">I</text><text x="1674.0" y="230" font-size="22" fill="#000" text-anchor="middle" stroke="#000" stroke-width="0.3">J</text><text x="1786.5" y="230" font-size="22" fill="#000" text-anchor="middle" stroke="#000" stroke-width="0.3">K</text><text x="1884.4" y="230" font-size="22" fill="#000" stroke="#000" stroke-width="0.3" clip-path="url(#lclip)">L</text></g><rect x="0" y="236" width="41" height="712" fill="#e6e6e6" /><rect x="0" y="292" width="40" height="27" fill="#d2d2d2" /><rect x="0" y="263" width="41" height="1" fill="#bdbdbd"/><rect x="0" y="291" width="41" height="1" fill="#bdbdbd"/><rect x="0" y="319" width="41" height="1" fill="#bdbdbd"/><rect x="0" y="347" width="41" height="1" fill="#bdbdbd"/><rect x="0" y="375" width="41" height="1" fill="#bdbdbd"/><rect x="0" y="403" width="41" height="1" fill="#bdbdbd"/><rect x="0" y="431" width="41" height="1" fill="#bdbdbd"/><rect x="0" y="459" width="41" height="1" fill="#bdbdbd"/><rect x="0" y="487" width="41" height="1" fill="#bdbdbd"/><rect x="0" y="515" width="41" height="1" fill="#bdbdbd"/><rect x="0" y="543" width="41" height="1" fill="#bdbdbd"/><rect x="0" y="571" width="41" height="1" fill="#bdbdbd"/><rect x="0" y="599" width="41" height="1" fill="#bdbdbd"/><rect x="0" y="627" width="41" height="1" fill="#bdbdbd"/><rect x="0" y="655" width="41" height="1" fill="#bdbdbd"/><rect x="0" y="683" width="41" height="1" fill="#bdbdbd"/><rect x="0" y="711" width="41" height="1" fill="#bdbdbd"/><rect x="0" y="739" width="41" height="1" fill="#bdbdbd"/><rect x="0" y="767" width="41" height="1" fill="#bdbdbd"/><rect x="0" y="795" width="41" height="1" fill="#bdbdbd"/><rect x="0" y="823" width="41" height="1" fill="#bdbdbd"/><rect x="0" y="851" width="41" height="1" fill="#bdbdbd"/><rect x="0" y="879" width="41" height="1" fill="#bdbdbd"/><rect x="0" y="907" width="41" height="1" fill="#bdbdbd"/><rect x="0" y="935" width="41" height="1" fill="#bdbdbd"/><rect x="41" y="236" width="1" height="712" fill="#a0a0a0"/><rect x="40" y="292" width="2" height="28" fill="#107c41" /><g font-family='"Liberation Sans", sans-serif' clip-path="url(#gridclip)"><text x="20.5" y="257.5" font-size="22" fill="#000" text-anchor="middle" stroke="#000" stroke-width="0.3">1</text><text x="20.5" y="285.5" font-size="22" fill="#000" text-anchor="middle" stroke="#000" stroke-width="0.3">2</text><text x="20.5" y="313.5" font-size="22" fill="#217346" text-anchor="middle" stroke="#217346" stroke-width="0.3">3</text><text x="20.5" y="341.5" font-size="22" fill="#000" text-anchor="middle" stroke="#000" stroke-width="0.3">4</text><text x="20.5" y="369.5" font-size="22" fill="#000" text-anchor="middle" stroke="#000" stroke-width="0.3">5</text><text x="20.5" y="397.5" font-size="22" fill="#000" text-anchor="middle" stroke="#000" stroke-width="0.3">6</text><text x="20.5" y="425.5" font-size="22" fill="#000" text-anchor="middle" stroke="#000" stroke-width="0.3">7</text><text x="20.5" y="453.5" font-size="22" fill="#000" text-anchor="middle" stroke="#000" stroke-width="0.3">8</text><text x="20.5" y="481.5" font-size="22" fill="#000" text-anchor="middle" stroke="#000" stroke-width="0.3">9</text><text x="20.5" y="509.5" font-size="22" fill="#000" text-anchor="middle" stroke="#000" stroke-width="0.3">10</text><text x="20.5" y="537.5" font-size="22" fill="#000" text-anchor="middle" stroke="#000" stroke-width="0.3">11</text><text x="20.5" y="565.5" font-size="22" fill="#000" text-anchor="middle" stroke="#000" stroke-width="0.3">12</text><text x="20.5" y="593.5" font-size="22" fill="#000" text-anchor="middle" stroke="#000" stroke-width="0.3">13</text><text x="20.5" y="621.5" font-size="22" fill="#000" text-anchor="middle" stroke="#000" stroke-width="0.3">14</text><text x="20.5" y="649.5" font-size="22" fill="#000" text-anchor="middle" stroke="#000" stroke-width="0.3">15</text><text x="20.5" y="677.5" font-size="22" fill="#000" text-anchor="middle" stroke="#000" stroke-width="0.3">16</text><text x="20.5" y="705.5" font-size="22" fill="#000" text-anchor="middle" stroke="#000" stroke-width="0.3">17</text><text x="20.5" y="733.5" font-size="22" fill="#000" text-anchor="middle" stroke="#000" stroke-width="0.3">18</text><text x="20.5" y="761.5" font-size="22" fill="#000" text-anchor="middle" stroke="#000" stroke-width="0.3">19</text><text x="20.5" y="789.5" font-size="22" fill="#000" text-anchor="middle" stroke="#000" stroke-width="0.3">20</text><text x="20.5" y="817.5" font-size="22" fill="#000" text-anchor="middle" stroke="#000" stroke-width="0.3">21</text><text x="20.5" y="845.5" font-size="22" fill="#000" text-anchor="middle" stroke="#000" stroke-width="0.3">22</text><text x="20.5" y="873.5" font-size="22" fill="#000" text-anchor="middle" stroke="#000" stroke-width="0.3">23</text><text x="20.5" y="901.5" font-size="22" fill="#000" text-anchor="middle" stroke="#000" stroke-width="0.3">24</text><text x="20.5" y="929.5" font-size="22" fill="#000" text-anchor="middle" stroke="#000" stroke-width="0.3">25</text><text x="20.5" y="957.5" font-size="22" fill="#000" text-anchor="middle" stroke="#000" stroke-width="0.3">26</text></g><rect x="1888" y="235" width="1" height="714" fill="#a0a0a0"/><rect x="0" y="948" width="1889" height="1" fill="#a0a0a0"/><rect x="0" y="0" width="1919" height="46" fill="#217346" /><rect x="0" y="45" width="1919" height="1" fill="#1f6e43"/><g fill="#1b633c" clip-path="url(#tbclip)"><path d="M-12 6 C-6 2 -3 -2 0 -8 C2 -14 6 -18 10 -20 C9 -14 7 -8 6 -2 C10 -1 16 0 20 2 C16 4 10 4 6 5 C4 10 0 14 -6 16 C-4 12 -3 9 -4 7 Z" transform="translate(1236 30) rotate(0) scale(0.8)"/><path d="M-12 6 C-6 2 -3 -2 0 -8 C2 -14 6 -18 10 -20 C9 -14 7 -8 6 -2 C10 -1 16 0 20 2 C16 4 10 4 6 5 C4 10 0 14 -6 16 C-4 12 -3 9 -4 7 Z" transform="translate(1318 18) rotate(0) scale(1.1)"/><path d="M-12 6 C-6 2 -3 -2 0 -8 C2 -14 6 -18 10 -20 C9 -14 7 -8 6 -2 C10 -1 16 0 20 2 C16 4 10 4 6 5 C4 10 0 14 -6 16 C-4 12 -3 9 -4 7 Z" transform="translate(1350 42) rotate(-10) scale(0.9)"/></g><g fill="none" stroke="#1b633c" stroke-linecap="round" clip-path="url(#tbclip)"><path d="M1470 4 C1500 8 1530 12 1560 14 C1600 16 1650 16 1700 22 C1740 27 1790 30 1840 26 C1870 24 1900 20 1919 18" stroke-width="2"/><path d="M1600 46 C1620 40 1650 34 1690 28" stroke-width="1.5"/><path d="M1780 4 C1810 10 1840 14 1870 14 C1890 14 1905 10 1919 6" stroke-width="1.5"/><path d="M1640 0 C1650 6 1665 12 1690 20" stroke-width="1.2"/></g><g fill="#1b633c" clip-path="url(#tbclip)"><path d="M-11.2 0 Q 0 -7.5 11.2 0 Q 0 7.5 -11.2 0 Z" transform="translate(1475 10) rotate(-60)"/><path d="M-12.6 0 Q 0 -9.0 12.6 0 Q 0 9.0 -12.6 0 Z" transform="translate(1500 22) rotate(30)"/><path d="M-11.2 0 Q 0 -7.5 11.2 0 Q 0 7.5 -11.2 0 Z" transform="translate(1520 6) rotate(-20)"/><path d="M-12.6 0 Q 0 -9.0 12.6 0 Q 0 9.0 -12.6 0 Z" transform="translate(1555 30) rotate(40)"/><path d="M-12.6 0 Q 0 -9.0 12.6 0 Q 0 9.0 -12.6 0 Z" transform="translate(1585 8) rotate(-30)"/><path d="M-11.2 0 Q 0 -7.5 11.2 0 Q 0 7.5 -11.2 0 Z" transform="translate(1612 24) rotate(60)"/><path d="M-15.4 0 Q 0 -10.5 15.4 0 Q 0 10.5 -15.4 0 Z" transform="translate(1640 20) rotate(80)"/><path d="M-12.6 0 Q 0 -9.0 12.6 0 Q 0 9.0 -12.6 0 Z" transform="translate(1660 40) rotate(-40)"/><path d="M-12.6 0 Q 0 -9.0 12.6 0 Q 0 9.0 -12.6 0 Z" transform="translate(1690 8) rotate(20)"/><path d="M-11.2 0 Q 0 -7.5 11.2 0 Q 0 7.5 -11.2 0 Z" transform="translate(1720 38) rotate(-30)"/><path d="M-16.8 0 Q 0 -10.5 16.8 0 Q 0 10.5 -16.8 0 Z" transform="translate(1760 24) rotate(10)"/><path d="M-14.0 0 Q 0 -9.0 14.0 0 Q 0 9.0 -14.0 0 Z" transform="translate(1785 12) rotate(-50)"/><path d="M-12.6 0 Q 0 -9.0 12.6 0 Q 0 9.0 -12.6 0 Z" transform="translate(1800 40) rotate(30)"/><path d="M-12.6 0 Q 0 -9.0 12.6 0 Q 0 9.0 -12.6 0 Z" transform="translate(1830 6) rotate(20)"/><path d="M-14.0 0 Q 0 -9.0 14.0 0 Q 0 9.0 -14.0 0 Z" transform="translate(1855 34) rotate(-20)"/><path d="M-12.6 0 Q 0 -9.0 12.6 0 Q 0 9.0 -12.6 0 Z" transform="translate(1880 8) rotate(40)"/><path d="M-14.0 0 Q 0 -9.0 14.0 0 Q 0 9.0 -14.0 0 Z" transform="translate(1905 30) rotate(-30)"/><path d="M-9.8 0 Q 0 -7.5 9.8 0 Q 0 7.5 -9.8 0 Z" transform="translate(1915 10) rotate(10)"/><path d="M-9.8 0 Q 0 -7.5 9.8 0 Q 0 7.5 -9.8 0 Z" transform="translate(1450 40) rotate(20)"/><path d="M-9.8 0 Q 0 -7.5 9.8 0 Q 0 7.5 -9.8 0 Z" transform="translate(1740 2) rotate(-10)"/></g><g font-family='"Liberation Sans", sans-serif'><text x="221" y="28" font-size="17.5" fill="#ffffff" textLength="156" lengthAdjust="spacingAndGlyphs" >Dynamic Arrays.xlsx</text><text x="420.5" y="28" font-size="17.5" fill="#ffffff" textLength="67.5" lengthAdjust="spacingAndGlyphs" >No Label</text></g><path d="M401.2 8.6 C397.5 11 394.5 11.6 390.9 11.6 L390.9 20 C390.9 25.5 395 29 401.2 31.4 C407.4 29 411.5 25.5 411.5 20 L411.5 11.6 C407.9 11.6 404.9 11 401.2 8.6 Z" fill="none" stroke="#fff" stroke-width="1.3"/><path d="M397.6 16.2 C397.6 13.9 399.2 12.6 401.2 12.6 C403.3 12.6 404.8 13.9 404.8 15.9 C404.8 18.6 401.2 19.2 401.2 22.8" fill="none" stroke="#fff" stroke-width="1.3"/><circle cx="401.2" cy="26.2" r="0.9" fill="#fff"/><path d="M496.4 16.6 L503.5 23.8 L510.5 16.6" fill="none" stroke="#fff" stroke-width="1.4"/><rect x="712" y="3" width="518" height="35" fill="#a2cdb5" /><circle cx="755" cy="16" r="6.6" fill="none" stroke="#1b5e37" stroke-width="1.3"/><path d="M750.3 20.7 L742.5 30.3" stroke="#1b5e37" stroke-width="1.4"/><g font-family='"Liberation Sans", sans-serif'><text x="786.5" y="27" font-size="17.5" fill="#1b5e37" textLength="50.5" lengthAdjust="spacingAndGlyphs" >Search</text><text x="1417" y="27.5" font-size="17.5" fill="#ffffff" textLength="89" lengthAdjust="spacingAndGlyphs" >Bani Lamba</text></g><g clip-path="url(#avclip)"><rect x="1520" y="1" width="38" height="38" fill="#eee9d6" /><path d="M1522 36 C1524 28 1527 22 1528 14 C1529 7 1533 4 1539 4 C1546 4 1549 8 1550 14 C1551 22 1553 28 1557 34 L1557 40 L1522 40 Z" fill="#3d2419"/><path d="M1548 10 C1550 16 1551 24 1556 31 L1556 36 C1552 32 1549 26 1548 20 Z" fill="#8a4a30" opacity="0.8"/><ellipse cx="1539.8" cy="16.5" rx="5.8" ry="9.2" fill="#d5a48a"/><rect x="1537" y="23" width="5.5" height="16" fill="#d09a80"/><path d="M1526 40 C1527 34 1531 30 1537 29.5 L1538 40 Z" fill="#dde3ee"/><path d="M1542 40 L1542.5 32 C1544 33 1545 35 1545.5 40 Z" fill="#dde3ee"/><ellipse cx="1539.8" cy="23.3" rx="1.8" ry="0.9" fill="#e05a66"/><path d="M1535.2 13.8 L1537.4 13.8 M1541.8 14.2 L1544 14.2" stroke="#3a2a22" stroke-width="1.1"/></g><g fill="none" stroke="#fff" stroke-width="1.4" stroke-linejoin="round"><path d="M1610.4 12.6 L1618.2 20.6 L1600.8 33 L1597.6 30.2 Z"/><path d="M1605.9 29.6 C1606.3 33.2 1611.5 33.6 1612 26.8"/><path d="M1614.3 10.3 L1614.3 12.4 M1617.2 13.6 L1620.4 10.9 M1618.5 16.9 L1620.8 16.9"/></g><g fill="none" stroke="#fff" stroke-width="1.3"><rect x="1666.5" y="13" width="19" height="14.5"/><path d="M1666.5 16 L1685.5 16 M1676 26.5 L1676 19.5 M1673 22 L1676 19 L1679 22"/><path d="M1738 19.5 L1754 19.5"/><rect x="1807.5" y="15.5" width="11.5" height="11.5" rx="1.8"/><path d="M1810.5 13 L1819 13 C1821 13 1822.5 14.5 1822.5 16.5 L1822.5 24"/><path d="M1876.5 12.5 L1891.5 27.5 M1891.5 12.5 L1876.5 27.5"/></g><rect x="0" y="91" width="1919" height="2" fill="#d9d7d5"/><g font-family='"Liberation Sans", sans-serif'><text x="24" y="77" font-size="20" fill="#424242" textLength="30" lengthAdjust="spacingAndGlyphs" >File</text><text x="100" y="77" font-size="20" fill="#424242" textLength="58" lengthAdjust="spacingAndGlyphs" >ICAEW</text><text x="200" y="77" font-size="20" fill="#424242" textLength="53" lengthAdjust="spacingAndGlyphs" >Home</text><text x="296" y="77" font-size="20" fill="#424242" textLength="47" lengthAdjust="spacingAndGlyphs" >Insert</text><text x="388" y="77" font-size="20" fill="#424242" textLength="105" lengthAdjust="spacingAndGlyphs" >Page Layout</text><text x="537" y="77" font-size="20" fill="#424242" textLength="80" lengthAdjust="spacingAndGlyphs" >Formulas</text><text x="658" y="77" font-size="20" fill="#424242" textLength="41" lengthAdjust="spacingAndGlyphs" >Data</text><text x="739" y="77" font-size="20" fill="#424242" textLength="60" lengthAdjust="spacingAndGlyphs" >Review</text><text x="841" y="77" font-size="20" fill="#424242" textLength="41" lengthAdjust="spacingAndGlyphs" >View</text><text x="924" y="77" font-size="20" fill="#424242" textLength="87" lengthAdjust="spacingAndGlyphs" >Automate</text><text x="1053" y="77" font-size="20" fill="#424242" textLength="89" lengthAdjust="spacingAndGlyphs" >Developer</text><text x="1185" y="77" font-size="20" fill="#424242" textLength="40" lengthAdjust="spacingAndGlyphs" >Help</text></g><rect x="1619.5" y="50.5" width="148" height="35" rx="4" fill="#fff" stroke="#8a8886" stroke-width="1"/><rect x="1780.5" y="50.5" width="120" height="35" rx="4" fill="#fff" stroke="#8a8886" stroke-width="1"/><path d="M1632.7 60.7 L1647.7 60.7 L1647.7 71.2 L1639 71.2 L1634.5 75.2 L1634.5 71.2 L1632.7 71.2 Z" fill="none" stroke="#217346" stroke-width="1.3" stroke-linejoin="round"/><path d="M1792.5 65 L1792.5 76 L1808 76 L1808 71.5 M1796.5 72 C1797 66.5 1800.5 64.5 1805 64.5 L1805 61 L1809.5 66 L1805 70.5 L1805 67.5 C1801 67.5 1798.5 69 1796.5 72 Z" fill="none" stroke="#217346" stroke-width="1.3" stroke-linejoin="round"/><path d="M1884.5 66.5 L1888.5 70.5 L1892.5 66.5" fill="none" stroke="#217346" stroke-width="1.4"/><g font-family='"Liberation Sans", sans-serif'><text x="1656" y="76" font-size="19" fill="#217346" font-weight="700" textLength="97" lengthAdjust="spacingAndGlyphs" >Comments</text><text x="1816.5" y="76" font-size="19" fill="#217346" font-weight="700" textLength="49.5" lengthAdjust="spacingAndGlyphs" >Share</text></g><g font-family='"Liberation Sans", sans-serif'><text x="10.3" y="123.6" font-size="17" fill="#3b3a39" textLength="75.7" lengthAdjust="spacingAndGlyphs" >AutoSave</text></g><rect x="96" y="105.5" width="56" height="23" rx="11.5" fill="none" stroke="#444" stroke-width="1.1"/><circle cx="106.8" cy="117.2" r="5.6" fill="#444"/><g font-family='"Liberation Sans", sans-serif'><text x="124" y="122.8" font-size="13.5" fill="#444" textLength="18.7" lengthAdjust="spacingAndGlyphs" >Off</text></g><path d="M170.8 108.8 L193.2 108.8 L193.2 131.2 L174 131.2 L170.8 128 Z" fill="#d69ade" stroke="#9e2aae" stroke-width="1.6"/><rect x="175.6" y="109.6" width="12.6" height="7.9" fill="#fbf7fb" stroke="#9e2aae" stroke-width="1.4"/><rect x="176.9" y="123.5" width="10.4" height="7.2" fill="#fbf7fb" stroke="#9e2aae" stroke-width="1.4"/><g fill="none" stroke="#333" stroke-width="1.5"><path d="M214.7 108.3 L214.7 117.6 L224.6 117.6"/><path d="M216 116.5 C219 111 223 108.2 227 108.2 C232 108.2 235.3 112 235.3 116 C235.3 119.5 233.5 121.5 231 124 L222.5 131.3"/><path d="M245 116.7 L249.2 120.6 L253.3 116.7" stroke-width="1.3"/></g><g fill="none" stroke="#8c8c8c" stroke-width="1.5"><path d="M292 108.3 L292 117.6 L282 117.6"/><path d="M290.7 116.5 C287.7 111 283.7 108.2 279.7 108.2 C274.7 108.2 271.4 112 271.4 116 C271.4 119.5 273.2 121.5 275.7 124 L284.2 131.3"/><path d="M302 116.7 L306.2 120.6 L310.3 116.7" stroke="#b4b4b4" stroke-width="1.3"/></g><rect x="327" y="109" width="10.5" height="5" fill="#f8f8f8"/><rect x="327" y="124.5" width="10.5" height="5.5" fill="#f8f8f8"/><path d="M327 109.2 L337.3 109.2 L337.3 113.5 M337.3 124.7 L337.3 129.8 L327 129.8" fill="none" stroke="#333" stroke-width="1.3"/><path d="M327 116 L341 116 L338 119.3 L341 122.6 L327 122.6 Z" fill="#8ec7ee"/><rect x="327" y="116" width="12" height="1.5" fill="#0f6cbd"/><rect x="327" y="121.1" width="12" height="1.5" fill="#0f6cbd"/><path d="M341.5 119 L351 119 M346.3 114.4 L341.6 119 L346.3 123.8" fill="none" stroke="#1a86d8" stroke-width="1.5"/><rect x="370" y="108.8" width="22" height="9" fill="#f8f8f8"/><path d="M370.5 108.8 L370.5 117.8 L375.5 117.8 M392 108.8 L392 117.8 L386.8 117.8" fill="none" stroke="#333" stroke-width="1.3"/><path d="M377 108.8 L384.8 108.8 L384.8 121.6 L380.9 118.8 L377 121.6 Z" fill="#8ec7ee"/><rect x="377" y="108.8" width="1.5" height="12.5" fill="#0f6cbd"/><rect x="383.3" y="108.8" width="1.5" height="12.5" fill="#0f6cbd"/><path d="M381 131.6 L381 122 M376.3 126.9 L381 122 L385.7 126.9" fill="none" stroke="#1a86d8" stroke-width="1.5"/><rect x="412.8" y="109" width="10.5" height="5" fill="#f8f8f8"/><rect x="412.8" y="124.5" width="10.5" height="5.5" fill="#f8f8f8"/><path d="M412.8 109.2 L423.1 109.2 L423.1 113.5 M423.1 124.7 L423.1 129.8 L412.8 129.8" fill="none" stroke="#333" stroke-width="1.3"/><path d="M412.8 116 L424.3 116 L427.8 119.3 L424.3 122.6 L412.8 122.6 Z" fill="#8ec7ee"/><rect x="412.8" y="116" width="12" height="1.5" fill="#0f6cbd"/><rect x="412.8" y="121.1" width="12" height="1.5" fill="#0f6cbd"/><path d="M428 115.3 L435.7 123.2 M435.7 115.3 L428 123.2" fill="none" stroke="#f03a24" stroke-width="1.6"/><rect x="456.2" y="108.8" width="22" height="9" fill="#f8f8f8"/><path d="M456.7 108.8 L456.7 117.8 L461.7 117.8 M478.2 108.8 L478.2 117.8 L473.0 117.8" fill="none" stroke="#333" stroke-width="1.3"/><path d="M463.2 108.8 L471.0 108.8 L471.0 121.6 L467.09999999999997 118.8 L463.2 121.6 Z" fill="#8ec7ee"/><rect x="463.2" y="108.8" width="1.5" height="12.5" fill="#0f6cbd"/><rect x="469.5" y="108.8" width="1.5" height="12.5" fill="#0f6cbd"/><path d="M463.5 123.3 L471 130.5 M471 123.3 L463.5 130.5" fill="none" stroke="#f03a24" stroke-width="1.6"/><path d="M501.3 131.2 L497.8 131.2 L497.8 108.6 L507.3 108.6 L514.4 115.5 L507.3 115.5 L507.3 108.6" fill="none" stroke="#333" stroke-width="1.3" stroke-linejoin="miter"/><rect x="498.4" y="109.2" width="8.4" height="21.4" fill="#f8f8f8"/><path d="M501.3 131.2 L497.8 131.2 L497.8 108.6 L507.3 108.6 L514.4 115.5 L507.3 115.5 L507.3 108.6" fill="none" stroke="#333" stroke-width="1.3"/><path d="M501.8 117.5 L504.3 117.5 M503.2 121.9 L505.8 121.9" stroke="#f03a24" stroke-width="1.2"/><path d="M504.5 130.8 L505.8 126.8 L515.6 117 C516.5 116.1 517.8 116.1 518.4 116.8 C519 117.5 519 118.6 518.2 119.4 L508.4 129.2 Z" fill="#1a86d8"/><path d="M528.3 116.4 L532.3 120.4 L536.4 116.4" fill="none" stroke="#333" stroke-width="1.3"/><path d="M560.8 115 L571.8 115 M562.3 118.6 L566.3 122.3 L570.3 118.6" fill="none" stroke="#333" stroke-width="1.3"/><rect x="6.5" y="159.5" width="153" height="33" fill="#fff" stroke="#c6c6c6" stroke-width="1"/><path d="M141.8 172.5 L149 172.5 L145.4 177 Z" fill="#666"/><rect x="179.5" y="168.5" width="3" height="3" fill="#a6a6a6" /><rect x="179.5" y="174.5" width="3" height="3" fill="#a6a6a6" /><rect x="179.5" y="180.5" width="3" height="3" fill="#a6a6a6" /><rect x="205.5" y="159.5" width="163" height="33" fill="#fff" stroke="#c6c6c6" stroke-width="1"/><rect x="373.5" y="159.5" width="1538" height="33" fill="#fff" stroke="#c6c6c6" stroke-width="1"/><path d="M224.5 169.5 L241.5 183.5 M241.5 169.5 L224.5 183.5" fill="none" stroke="#a6a6a6" stroke-width="2"/><path d="M278.5 177 L284.5 183 L296.5 169.5" fill="none" stroke="#a6a6a6" stroke-width="2.4"/><g fill="none" stroke="#646464" stroke-linecap="round"><path d="M345 166.8 C342.5 164.8 340 166 339.2 170.5 L337.2 181.5 C336.4 185.8 334.6 187.3 332.2 185.8" stroke-width="1.6"/><path d="M335.2 172.4 L343.4 172.4" stroke-width="1.1"/><path d="M341.6 175.6 C343.4 175.1 344 176.6 344.5 178.4 L345.6 181.8 C346.2 183.4 347.6 183.2 348.4 182.2" stroke-width="1.4"/><path d="M349 176 C347.8 175 346.6 175.9 345.6 177.4 L342.6 181.6 C341.8 182.8 340.8 183 340.4 182.2" stroke-width="1.4"/></g><circle cx="344.6" cy="167.2" r="1.35" fill="#646464"/><circle cx="332.5" cy="185.2" r="1.35" fill="#646464"/><path d="M1893.3 174.5 L1898.5 179.7 L1903.7 174.5" fill="none" stroke="#777" stroke-width="2.2"/><g font-family='"Liberation Sans", sans-serif' style="font-kerning:none"><text x="13.5" y="182.7" font-size="21.5" fill="#222" >F3</text><text x="390" y="183.6" font-size="21.8" fill="#222" textLength="175" lengthAdjust="spacingAndGlyphs" >=$D3:$D102+E3#</text></g><rect x="0" y="949" width="1919" height="33" fill="#e6e6e6" /><rect x="0" y="982" width="1919" height="1" fill="#cfcdcb"/><path d="M34 959.5 L28.5 964.6 L34 969.7 Z" fill="#b8b8b8"/><path d="M62.5 959.5 L68 964.6 L62.5 969.7 Z" fill="#b8b8b8"/><rect x="117" y="948" width="89" height="30" fill="#ffffff" /><rect x="117" y="948" width="1" height="29" fill="#8f8f8f"/><rect x="205" y="948" width="1" height="29" fill="#8f8f8f"/><rect x="117" y="976" width="89" height="3" fill="#217346" /><g font-family='"Liberation Sans", sans-serif'><text x="129.5" y="970" font-size="20" fill="#217346" font-weight="700" textLength="62" lengthAdjust="spacingAndGlyphs" >Sheet1</text></g><circle cx="256" cy="965" r="10.6" fill="none" stroke="#7a7a7a" stroke-width="1.2"/><path d="M256 959.5 L256 970.5 M250.5 965 L261.5 965" stroke="#7a7a7a" stroke-width="1.4"/><rect x="1147" y="957" width="3" height="3" fill="#a6a6a6" /><rect x="1147" y="963" width="3" height="3" fill="#a6a6a6" /><rect x="1147" y="969" width="3" height="3" fill="#a6a6a6" /><rect x="1192" y="952" width="673" height="25" fill="#f2f2f2" /><rect x="1167.5" y="952.5" width="24" height="24" fill="#fff" stroke="#8f8f8f" stroke-width="1"/><path d="M1182 958.7 L1176 964.5 L1182 970.3 Z" fill="#222"/><rect x="1242.5" y="952.5" width="603" height="24" fill="#fff" stroke="#8f8f8f" stroke-width="1"/><rect x="1865.5" y="952.5" width="24" height="24" fill="#fff" stroke="#8f8f8f" stroke-width="1"/><path d="M1875 959 L1881 964.5 L1875 970 Z" fill="#222"/><rect x="1889" y="208" width="30" height="741" fill="#e6e6e6" /><rect x="1890" y="235" width="27" height="690" fill="#f2f2f2" /><rect x="1891.5" y="209.5" width="24" height="24.5" fill="#fff" stroke="#8f8f8f" stroke-width="1"/><path d="M1897.8 224.2 L1903.5 218 L1909.2 224.2 Z" fill="#222"/><rect x="1891.5" y="234.5" width="24" height="164" fill="#fff" stroke="#8f8f8f" stroke-width="1"/><rect x="1891.5" y="925.5" width="24" height="24" fill="#fff" stroke="#8f8f8f" stroke-width="1"/><path d="M1898 934.8 L1909 934.8 L1903.5 940.5 Z" fill="#222"/><g font-family='"Liberation Sans", sans-serif'><text x="16.8" y="1005.3" font-size="15.5" fill="#605e5c" textLength="42" lengthAdjust="spacingAndGlyphs" >Ready</text><text x="160.8" y="1005.2" font-size="15.5" fill="#444" font-weight="700" textLength="186.5" lengthAdjust="spacingAndGlyphs" >Accessibility: Investigate</text><text x="1336.6" y="1005.0" font-size="15.5" fill="#444" textLength="109.8" lengthAdjust="spacingAndGlyphs" >Display Settings</text><text x="1868.7" y="1004.9" font-size="16" fill="#555" textLength="39.3" lengthAdjust="spacingAndGlyphs" >100%</text></g><g fill="none" stroke="#444" stroke-width="1.3"><path d="M93 1007.3 L86.8 1007.3 L86.8 990.5 L107.3 990.5 L107.3 995.5"/><path d="M86.8 993.8 L107.3 993.8"/><path d="M89.5 996.5 L94.5 996.5 M89.5 999.8 L92.5 999.8 M89.5 1002.8 L91.5 1002.8"/><circle cx="100.8" cy="1002.5" r="6.3"/></g><circle cx="100.8" cy="1002.5" r="2.6" fill="#444"/><g fill="none" stroke="#444" stroke-width="1.3" stroke-linecap="round" stroke-linejoin="round"><circle cx="142.5" cy="991.8" r="2.5"/><path d="M141 997 L136.2 995.9 C133.8 995.4 133.3 992.3 135.5 991.7 C136.6 991.4 138 992.4 140.2 993.6 L144.8 993.6 C147 992.4 148.4 991.4 149.5 991.7 C151.7 992.3 151.2 995.4 148.8 995.9 L146.3 996.7 L146.3 998.6"/><path d="M141 997 C140.8 1000.2 140.1 1003 138.7 1006 C137.9 1007.9 140 1009.7 141.3 1007.9 L142.7 1003.6 L144 1006.3"/><path d="M144.6 999.6 L154 1008.8 M154 999.6 L144.6 1008.8"/></g><g fill="none" stroke="#444" stroke-width="1.2"><path d="M1316 1003.5 L1310.5 1003.5 L1310.5 990.3 L1331 990.3 L1331 996"/><circle cx="1324.5" cy="1002.5" r="4.2"/></g><circle cx="1324.5" cy="1002.5" r="1.6" fill="#444"/><path d="M1324.5 996.5 L1324.5 998 M1324.5 1007 L1324.5 1008.5 M1318.5 1002.5 L1320 1002.5 M1329 1002.5 L1330.5 1002.5 M1320.3 998.3 L1321.3 999.3 M1327.7 1005.7 L1328.7 1006.7 M1328.7 998.3 L1327.7 999.3 M1321.3 1005.7 L1320.3 1006.7" stroke="#444" stroke-width="1.6"/><rect x="1474" y="983" width="60" height="29" fill="#d2d0ce" /><g fill="none" stroke="#444" stroke-width="1.4"><rect x="1493.7" y="989.3" width="18.6" height="18.3"/><path d="M1499.9 989.3 L1499.9 1007.6 M1506.1 989.3 L1506.1 1007.6 M1493.7 995.4 L1512.3 995.4 M1493.7 1001.5 L1512.3 1001.5"/><rect x="1553.7" y="989" width="20.6" height="18.6"/><rect x="1557" y="992.3" width="14" height="12"/><path d="M1559.5 995.3 L1568.5 995.3 M1559.5 998.3 L1568.5 998.3 M1559.5 1001.3 L1568.5 1001.3" stroke-width="1.1"/><rect x="1613.7" y="989" width="20.6" height="18.6"/><path d="M1613.7 998.5 L1627 998.5 L1627 989 M1620 989 L1620 998.5"/></g><path d="M1662 998.8 L1673.5 998.8 M1837.5 998.8 L1849 998.8 M1843.3 993 L1843.3 1004.6" stroke="#555" stroke-width="1.3"/><rect x="1682" y="998" width="149" height="2" fill="#444"/><rect x="1752" y="990" width="8" height="18" fill="#3a3a3a" /></svg>
</body></html>
